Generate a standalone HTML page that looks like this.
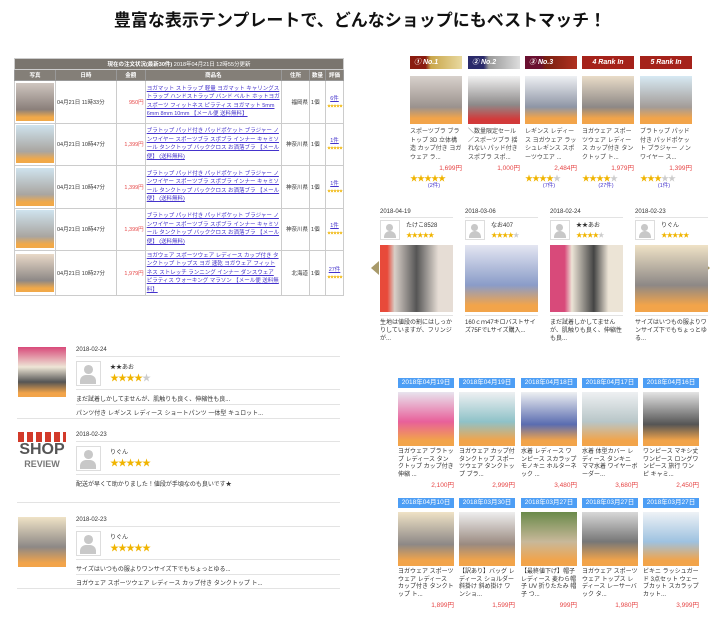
<!DOCTYPE html>
<html><head><meta charset="utf-8"><style>
*{margin:0;padding:0;box-sizing:border-box}
body{width:720px;height:631px;background:#fff;font-family:"Liberation Sans","Noto Sans CJK JP",sans-serif;position:relative;overflow:hidden;color:#333}
.a{position:absolute}
h1{position:absolute;left:0;top:6px;width:720px;text-align:center;font-size:17px;font-weight:bold;color:#111;font-family:"Liberation Sans","Noto Sans CJK JP",sans-serif}
table{position:absolute;left:14px;top:58px;width:330px;border-collapse:collapse;font-size:5.5px}
td,th{border:1px solid #ccc;padding:1px;vertical-align:middle}
th{background:#847f78;color:#fff;font-weight:bold;height:11px;border-color:#999}
.cap{background:#7a756e;color:#fff;text-align:center;height:11px;font-weight:normal}
tr.r td{height:42.5px}
.ph{width:40px}.ph div{width:38px;height:38px;background:linear-gradient(#cfc6c0,#8a7f7a 70%,#f1a949 90%)}
.lk{color:#4433cc;text-decoration:underline;line-height:8.4px}
.pr{color:#e64545;text-align:right}
.rk{position:absolute;width:52px;font-size:6px;line-height:8.5px;color:#333}
.bd{height:13px;color:#fff;font-style:italic;font-weight:bold;font-size:7px;line-height:13px;padding-left:4px}
.im{background:linear-gradient(#d8d1cc,#9b928e 65%,#f2a44a 88%,#f2a44a);border-bottom:0}
.price{color:#e64545;text-align:right;font-size:6.5px}
.st{color:#f0b400;font-size:8px;letter-spacing:-1px}
.gs{color:#ccc}
.rv{position:absolute;width:73px;font-size:6px;color:#333}
.av{width:20px;height:20px;border:1px solid #ddd;background:#fff;position:relative}
.av.a{position:absolute}
.av:before{content:"";position:absolute;left:30%;top:15%;width:38%;height:38%;border-radius:50%;background:#c8c8c8}
.av:after{content:"";position:absolute;left:15%;top:56%;width:68%;height:38%;border-radius:6px 6px 0 0;background:#c8c8c8}
.g{position:absolute;width:56px;font-size:6px;line-height:7.7px;color:#333}
.dl{background:#4d9ef5;color:#fff;font-size:6.5px;height:10px;line-height:10px;text-align:center;width:56px}
.line{position:absolute;height:1px;background:#e3e3e3}
.t6{font-size:6px;color:#333}
</style></head><body>
<h1>豊富な表示テンプレートで、どんなショップにもベストマッチ！</h1>

<table>
<tr><td colspan="7" class="cap"><b>現在の注文状況(最新30件)</b> 2018年04月21日 12時55分更新</td></tr>
<tr><th>写真</th><th>日時</th><th>金額</th><th>商品名</th><th>住所</th><th>数量</th><th>評価</th></tr>
<tr class="r"><td class="ph"><div></div></td><td style="width:61px">04月21日 11時33分</td><td class="pr" style="width:29px">950円</td><td class="lk" style="width:137px">ヨガマット ストラップ 軽量 ヨガマット キャリングストラップ ハンドストラップ バンド ベルト ホットヨガ スポーツ フィットネス ピラティス ヨガマット 5mm 6mm 8mm 10mm 【メール便 送料無料】</td><td style="width:28px;text-align:right">福岡県</td><td style="width:16px">1個</td><td style="text-align:center"><span class="lk">6件</span><br><span class="st" style="font-size:4px">★★★★★</span></td></tr>
<tr class="r"><td class="ph"><div style="background:linear-gradient(#cfe3ee,#a9a5a0 70%,#f1a949 90%)"></div></td><td>04月21日 10時47分</td><td class="pr">1,399円</td><td class="lk">ブラトップ パッド付き パッドポケット ブラジャー ノンワイヤー スポーツブラ スポブラ インナー キャミソール タンクトップ バッククロス お洒落ブラ 【メール便】 (送料無料)</td><td style="text-align:right">神奈川県</td><td>1個</td><td style="text-align:center"><span class="lk">1件</span><br><span class="st" style="font-size:4px">★★★★★</span></td></tr>
<tr class="r"><td class="ph"><div style="background:linear-gradient(#cfe3ee,#a9a5a0 70%,#f1a949 90%)"></div></td><td>04月21日 10時47分</td><td class="pr">1,399円</td><td class="lk">ブラトップ パッド付き パッドポケット ブラジャー ノンワイヤー スポーツブラ スポブラ インナー キャミソール タンクトップ バッククロス お洒落ブラ 【メール便】 (送料無料)</td><td style="text-align:right">神奈川県</td><td>1個</td><td style="text-align:center"><span class="lk">1件</span><br><span class="st" style="font-size:4px">★★★★★</span></td></tr>
<tr class="r"><td class="ph"><div style="background:linear-gradient(#cfe3ee,#a9a5a0 70%,#f1a949 90%)"></div></td><td>04月21日 10時47分</td><td class="pr">1,399円</td><td class="lk">ブラトップ パッド付き パッドポケット ブラジャー ノンワイヤー スポーツブラ スポブラ インナー キャミソール タンクトップ バッククロス お洒落ブラ 【メール便】 (送料無料)</td><td style="text-align:right">神奈川県</td><td>1個</td><td style="text-align:center"><span class="lk">1件</span><br><span class="st" style="font-size:4px">★★★★★</span></td></tr>
<tr class="r"><td class="ph"><div style="background:linear-gradient(#e9d9c8,#8d8886 70%,#f1a949 90%)"></div></td><td>04月21日 10時27分</td><td class="pr">1,979円</td><td class="lk">ヨガウェア スポーツウェア レディース カップ付き タンクトップ トップス ヨガ 速乾 ヨガウェア フィットネス ストレッチ ランニング インナー ダンスウェア ピラティス ウォーキング マラソン 【メール便 送料無料】</td><td style="text-align:right">北海道</td><td>1個</td><td style="text-align:center"><span class="lk">27件</span><br><span class="st" style="font-size:4px">★★★★★</span></td></tr>
</table>

<!-- ranking -->
<div class="rk" style="left:410px;top:56px"><div class="bd" style="background:linear-gradient(90deg,#8a1c10 30%,#c9a64a 40%,#e8d9a0)">① No.1</div></div>
<div class="rk" style="left:468px;top:56px"><div class="bd" style="background:linear-gradient(90deg,#2a2a6a 30%,#999 40%,#ddd)">② No.2</div></div>
<div class="rk" style="left:525px;top:56px"><div class="bd" style="background:linear-gradient(90deg,#6a1030 30%,#7a2010 40%,#b03020)">③ No.3</div></div>
<div class="rk" style="left:582px;top:56px"><div class="bd" style="background:#a5221a;text-align:center;padding:0">4 Rank In</div></div>
<div class="rk" style="left:640px;top:56px"><div class="bd" style="background:#a5221a;text-align:center;padding:0">5 Rank In</div></div>

<div class="rk" style="left:410px;top:76px"><div class="im" style="height:48px"></div><div style="margin-top:4px;color:#444">スポーツブラ ブラトップ 3D 立体構造 カップ付き ヨガウェア ラ...</div><div class="price" style="margin-top:3px">1,699円</div><div class="st" style="margin-top:1px">★★★★★</div><div style="color:#4433cc;text-align:center;width:48px;font-size:5.5px;line-height:6px">(2件)</div></div>
<div class="rk" style="left:468px;top:76px"><div class="im" style="height:48px;background:linear-gradient(#f1f1f1,#8d8a8a 60%,#d23a3a 90%)"></div><div style="margin-top:4px;color:#444">＼数量限定セール／スポーツブラ 揺れない パッド付き スポブラ スポ...</div><div class="price" style="margin-top:3px">1,000円</div></div>
<div class="rk" style="left:525px;top:76px"><div class="im" style="height:48px;background:linear-gradient(#eef0f3,#8e95a5 65%,#f2a44a 88%)"></div><div style="margin-top:4px;color:#444">レギンス レディース ヨガウェア ラッシュレギンス スポーツウエア ...</div><div class="price" style="margin-top:3px">2,484円</div><div class="st" style="margin-top:1px">★★★★<span class="gs">★</span></div><div style="color:#4433cc;text-align:center;width:48px;font-size:5.5px;line-height:6px">(7件)</div></div>
<div class="rk" style="left:582px;top:76px"><div class="im" style="height:48px;background:linear-gradient(#e9dcc8,#8d8886 65%,#f2a44a 88%)"></div><div style="margin-top:4px;color:#444">ヨガウェア スポーツウェア レディース カップ付き タンクトップ ト...</div><div class="price" style="margin-top:3px">1,979円</div><div class="st" style="margin-top:1px">★★★★<span class="gs">★</span></div><div style="color:#4433cc;text-align:center;width:48px;font-size:5.5px;line-height:6px">(27件)</div></div>
<div class="rk" style="left:640px;top:76px"><div class="im" style="height:48px;background:linear-gradient(#d7e9f3,#a39c98 65%,#f2a44a 88%)"></div><div style="margin-top:4px;color:#444">ブラトップ パッド付き パッドポケット ブラジャー ノンワイヤー ス...</div><div class="price" style="margin-top:3px">1,399円</div><div class="st" style="margin-top:1px">★★★<span class="gs">★★</span></div><div style="color:#4433cc;text-align:center;width:48px;font-size:5.5px;line-height:6px">(1件)</div></div>

<!-- review carousel -->
<div class="a" style="left:371px;top:261px;width:0;height:0;border-top:7px solid transparent;border-bottom:7px solid transparent;border-right:8px solid #a89a6a"></div>
<div class="a" style="left:702px;top:261px;width:0;height:0;border-top:7px solid transparent;border-bottom:7px solid transparent;border-left:8px solid #a89a6a"></div>

<div class="rv" style="left:380px;top:209px"><div>2018-04-19</div><div class="line" style="position:static;margin:2px 0"></div><div style="display:flex;gap:6px"><div class="av"></div><div>たけこ8528<br><span class="st" style="font-size:6.5px">★★★★★</span></div></div><div style="height:67px;margin-top:5px;background:linear-gradient(90deg,#e84a3a 10%,#d8cfc8 20%,#555 50%,#e6ddd5 80%)"></div><div class="line" style="position:static;margin:3px 0"></div><div style="line-height:8px">生地は値段の割にはしっかりしていますが、フリンジが...</div></div>
<div class="rv" style="left:465px;top:209px"><div>2018-03-06</div><div class="line" style="position:static;margin:2px 0"></div><div style="display:flex;gap:6px"><div class="av"></div><div>なお407<br><span class="st" style="font-size:6.5px">★★★★<span class="gs">★</span></span></div></div><div style="height:67px;margin-top:5px;background:linear-gradient(#e4e6f2,#8a9cc8 60%,#f2a44a 90%)"></div><div class="line" style="position:static;margin:3px 0"></div><div style="line-height:8px">160ｃｍ47キロバストサイズ75FでLサイズ購入...</div></div>
<div class="rv" style="left:550px;top:209px"><div>2018-02-24</div><div class="line" style="position:static;margin:2px 0"></div><div style="display:flex;gap:6px"><div class="av"></div><div>★★あお<br><span class="st" style="font-size:6.5px">★★★★<span class="gs">★</span></span></div></div><div style="height:67px;margin-top:5px;background:linear-gradient(90deg,#d84a7a 20%,#ece4d6 30%,#444 60%,#ece4d6 80%)"></div><div class="line" style="position:static;margin:3px 0"></div><div style="line-height:8px">まだ試着しかしてませんが、肌触りも良く、伸縮性も良...</div></div>
<div class="rv" style="left:635px;top:209px"><div>2018-02-23</div><div class="line" style="position:static;margin:2px 0"></div><div style="display:flex;gap:6px"><div class="av"></div><div>りぐん<br><span class="st" style="font-size:6.5px">★★★★★</span></div></div><div style="height:67px;margin-top:5px;background:linear-gradient(#efe2c6,#8d8886 60%,#f2a44a 90%)"></div><div class="line" style="position:static;margin:3px 0"></div><div style="line-height:8px">サイズはいつもの服よりワンサイズ下でもちょっとゆる...</div></div>

<!-- bottom-left reviews -->
<div class="a" style="left:18px;top:347px;width:48px;height:50px;background:linear-gradient(#d84a7a,#eee6d6 40%,#555 70%,#f2a44a 92%)"></div>
<div class="a t6" style="left:76px;top:347px">2018-02-24</div><div class="line" style="left:76px;top:356px;width:264px"></div>
<div class="av a" style="left:76px;top:361px;width:25px;height:25px"></div>
<div class="a t6" style="left:110px;top:362px">★★あお<br><span class="st" style="font-size:9px">★★★★<span class="gs">★</span></span></div>
<div class="line" style="left:76px;top:389px;width:264px"></div>
<div class="a t6" style="left:76px;top:394px">まだ試着しかしてませんが、肌触りも良く、伸縮性も良...</div>
<div class="line" style="left:76px;top:404px;width:264px"></div>
<div class="a t6" style="left:76px;top:408px">パンツ付き レギンス レディース ショートパンツ 一体型 キュロット...</div>
<div class="line" style="left:17px;top:418px;width:323px"></div>

<div class="a" style="left:18px;top:432px;width:48px;height:50px;text-align:center;font-weight:bold;color:#555">
<div style="height:10px;background:repeating-linear-gradient(90deg,#d23a2a 0 6px,#fff 6px 9px)"></div>
<div style="font-size:16px;line-height:16px">SHOP</div><div style="font-size:9px;line-height:12px;color:#777">REVIEW</div></div>
<div class="a t6" style="left:76px;top:432px">2018-02-23</div><div class="line" style="left:76px;top:441px;width:264px"></div>
<div class="av a" style="left:76px;top:446px;width:25px;height:25px"></div>
<div class="a t6" style="left:110px;top:447px">りぐん<br><span class="st" style="font-size:9px">★★★★★</span></div>
<div class="line" style="left:76px;top:474px;width:264px"></div>
<div class="a t6" style="left:76px;top:479px">配送が早くて助かりました！値段が手頃なのも良いです★</div>
<div class="line" style="left:17px;top:502px;width:323px"></div>

<div class="a" style="left:18px;top:517px;width:48px;height:50px;background:linear-gradient(#efe2c6,#8d8886 60%,#f2a44a 92%)"></div>
<div class="a t6" style="left:76px;top:517px">2018-02-23</div><div class="line" style="left:76px;top:526px;width:264px"></div>
<div class="av a" style="left:76px;top:531px;width:25px;height:25px"></div>
<div class="a t6" style="left:110px;top:532px">りぐん<br><span class="st" style="font-size:9px">★★★★★</span></div>
<div class="line" style="left:76px;top:559px;width:264px"></div>
<div class="a t6" style="left:76px;top:564px">サイズはいつもの服よりワンサイズ下でもちょっとゆる...</div>
<div class="line" style="left:76px;top:574px;width:264px"></div>
<div class="a t6" style="left:76px;top:578px">ヨガウェア スポーツウェア レディース カップ付き タンクトップ ト...</div>
<div class="line" style="left:17px;top:588px;width:323px"></div>

<!-- right grid row 1 -->
<div class="g" style="left:398px;top:378px"><div class="dl">2018年04月19日</div><div style="height:54px;margin-top:4px;background:linear-gradient(#e8e4ee,#e8609a 55%,#f2a44a 90%)"></div><div style="margin-top:3px">ヨガウェア ブラトップ レディース タンクトップ カップ付き 伸縮 ...</div><div class="price" style="margin-top:2px">2,100円</div></div>
<div class="g" style="left:459px;top:378px"><div class="dl">2018年04月19日</div><div style="height:54px;margin-top:4px;background:linear-gradient(#eef0f2,#8fc2c8 55%,#f2a44a 90%)"></div><div style="margin-top:3px">ヨガウェア カップ付タンクトップ スポーツウェア タンクトップ ブラ...</div><div class="price" style="margin-top:2px">2,999円</div></div>
<div class="g" style="left:521px;top:378px"><div class="dl">2018年04月18日</div><div style="height:54px;margin-top:4px;background:linear-gradient(#eef0f2,#5a6cb0 60%,#f2a44a 90%)"></div><div style="margin-top:3px">水着 レディース ワンピース スカラップ モノキニ ホルターネック ...</div><div class="price" style="margin-top:2px">3,480円</div></div>
<div class="g" style="left:582px;top:378px"><div class="dl">2018年04月17日</div><div style="height:54px;margin-top:4px;background:linear-gradient(#eef0f2,#b8c6c8 55%,#f2a44a 90%)"></div><div style="margin-top:3px">水着 体型カバー レディース タンキニ ママ水着 ワイヤーボーダー...</div><div class="price" style="margin-top:2px">3,680円</div></div>
<div class="g" style="left:643px;top:378px"><div class="dl">2018年04月16日</div><div style="height:54px;margin-top:4px;background:linear-gradient(#e4e4e4,#555 60%,#f2a44a 90%)"></div><div style="margin-top:3px">ワンピース マキシ丈ワンピース ロングワンピース 旅行 ワンピ キャミ...</div><div class="price" style="margin-top:2px">2,450円</div></div>
<!-- row 2 -->
<div class="g" style="left:398px;top:498px"><div class="dl">2018年04月10日</div><div style="height:54px;margin-top:4px;background:linear-gradient(#efe2c6,#8d8886 60%,#f2a44a 90%)"></div><div style="margin-top:3px">ヨガウェア スポーツウェア レディース カップ付き タンクトップ ト...</div><div class="price" style="margin-top:2px">1,899円</div></div>
<div class="g" style="left:459px;top:498px"><div class="dl">2018年03月30日</div><div style="height:54px;margin-top:4px;background:linear-gradient(#eee,#9a8a80 60%,#f2a44a 90%)"></div><div style="margin-top:3px">【訳あり】バッグ レディース ショルダー 斜掛け 斜め掛け ワンショ...</div><div class="price" style="margin-top:2px">1,599円</div></div>
<div class="g" style="left:521px;top:498px"><div class="dl">2018年03月27日</div><div style="height:54px;margin-top:4px;background:linear-gradient(#6a8a4a,#c8b89a 55%,#f2a44a 90%)"></div><div style="margin-top:3px">【最終値下げ】帽子 レディース 麦わら帽子 UV 折りたたみ 帽子 つ...</div><div class="price" style="margin-top:2px">999円</div></div>
<div class="g" style="left:582px;top:498px"><div class="dl">2018年03月27日</div><div style="height:54px;margin-top:4px;background:linear-gradient(#d8d8d8,#777 55%,#f2a44a 90%)"></div><div style="margin-top:3px">ヨガウェア スポーツウェア トップス レディース レーサーバック タ...</div><div class="price" style="margin-top:2px">1,980円</div></div>
<div class="g" style="left:643px;top:498px"><div class="dl">2018年03月27日</div><div style="height:54px;margin-top:4px;background:linear-gradient(#eef2f6,#9ec2e0 55%,#f2a44a 90%)"></div><div style="margin-top:3px">ビキニ ラッシュガード 3点セット ウェーブカット スカラップカット...</div><div class="price" style="margin-top:2px">3,999円</div></div>
</body></html>
